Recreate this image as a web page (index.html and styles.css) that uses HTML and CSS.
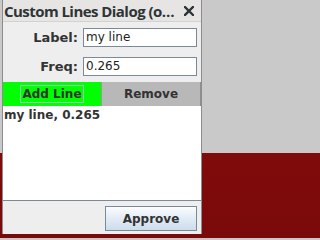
FILE: index.html
```html
<!DOCTYPE html>
<html>
<head>
<meta charset="utf-8">
<link rel="stylesheet" href="styles.css">
</head>
<body>
<div class="window">
  <div class="titlebar">
    <span class="title">Custom Lines Dialog (o…</span>
    <svg class="close" width="10" height="10" viewBox="0 0 10 10"><path d="M1 1 L9 9 M9 1 L1 9" stroke="#2e3436" stroke-width="2.4" stroke-linecap="square"/></svg>
  </div>
  <div class="form">
    <label class="lbl">Label:</label>
    <div class="field">my line</div>
    <label class="lbl">Freq:</label>
    <div class="field">0.265</div>
  </div>
  <div class="buttons">
    <div class="btn add"><span class="focus">Add Line</span></div>
    <div class="btn remove">Remove</div>
  </div>
  <div class="list">
    <div class="item">my line, 0.265</div>
  </div>
  <div class="footer">
    <div class="approve">Approve</div>
  </div>
</div>
</body>
</html>
```
FILE: styles.css
```css
html, body {
  margin: 0;
  padding: 0;
}
body {
  width: 204px;
  height: 238px;
  overflow: hidden;
  background: linear-gradient(to bottom, #c9c9c9 0, #c9c9c9 153px, #800b0b 153px, #7a0a0a 100%);
  font-family: "DejaVu Sans", sans-serif;
}
.window {
  margin-left: 2px;
  width: 198px;
  height: 234px;
  border-left: 1px solid #8c8c8c;
  border-right: 1px solid #8c8c8c;
  background: #eeeeee;
  display: flex;
  flex-direction: column;
}
.titlebar {
  height: 21px;
  background: #e6e5e3;
  border-bottom: 1px solid #d3d2cf;
  display: flex;
  align-items: center;
  justify-content: space-between;
  padding: 0 7px 0 1px;
}
.title {
  font-family: "Open Sans", sans-serif;
  font-weight: 700;
  font-size: 15px;
  letter-spacing: -0.55px;
  color: #2e3436;
  white-space: nowrap;
}
.close {
  display: block;
}
.form {
  display: grid;
  grid-template-columns: 75px 114px;
  column-gap: 5px;
  row-gap: 10px;
  padding-top: 6px;
  align-items: center;
}
.lbl {
  text-align: right;
  font-weight: 700;
  font-size: 13px;
  color: #333333;
}
.field {
  height: 17px;
  border: 1px solid #7a8a99;
  background: #ffffff;
  font-size: 12px;
  line-height: 17px;
  padding-left: 2px;
  color: #222222;
}
.buttons {
  display: grid;
  grid-template-columns: 98px 100px;
  margin-top: 6px;
  height: 24px;
}
.btn {
  display: flex;
  align-items: center;
  justify-content: center;
  font-weight: 700;
  font-size: 12px;
  color: #333333;
}
.add {
  background: #00ff00;
}
.focus {
  border: 1px solid #a3b8cc;
  padding: 0 1px;
  line-height: 16px;
}
.remove {
  background: #b8b8b8;
  border-left: 1px solid #9a9a9a;
  border-right: 1px solid #8e8e8e;
}
.list {
  flex: 1;
  background: #ffffff;
  border-bottom: 1px solid #7a8a99;
}
.item {
  font-weight: 700;
  font-size: 12px;
  color: #333333;
  padding: 2px 0 0 1px;
}
.footer {
  display: flex;
  justify-content: flex-end;
  padding: 5px 4px 3px 0;
}
.approve {
  width: 90px;
  height: 23px;
  border: 1px solid #7a8a99;
  background: linear-gradient(to bottom, #fbfcfe 0%, #e4edf6 45%, #cddcec 100%);
  display: flex;
  align-items: center;
  justify-content: center;
  font-weight: 700;
  font-size: 12px;
  color: #333333;
}
```
